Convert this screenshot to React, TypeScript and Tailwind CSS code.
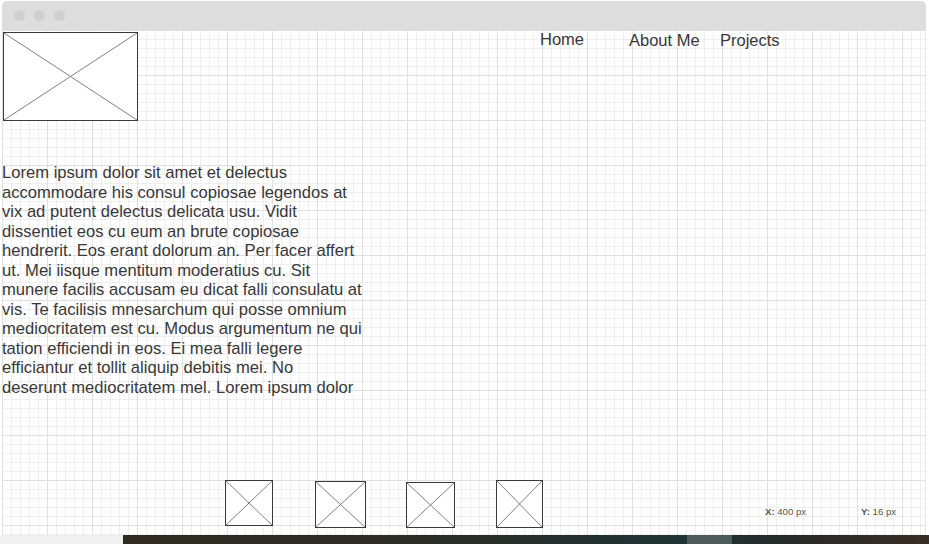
import type { ReactNode } from "react";

const lines = [
  "Lorem ipsum dolor sit amet et delectus",
  "accommodare his consul copiosae legendos at",
  "vix ad putent delectus delicata usu. Vidit",
  "dissentiet eos cu eum an brute copiosae",
  "hendrerit. Eos erant dolorum an. Per facer affert",
  "ut. Mei iisque mentitum moderatius cu. Sit",
  "munere facilis accusam eu dicat falli consulatu at",
  "vis. Te facilisis mnesarchum qui posse omnium",
  "mediocritatem est cu. Modus argumentum ne qui",
  "tation efficiendi in eos. Ei mea falli legere",
  "efficiantur et tollit aliquip debitis mei. No",
  "deserunt mediocritatem mel. Lorem ipsum dolor",
];

function Placeholder({ w, h, className }: { w: number; h: number; className?: string }) {
  return (
    <svg width={w} height={h} viewBox={`0 0 ${w} ${h}`} className={`shrink-0 bg-white ${className ?? ""}`}>
      <line x1="1" y1="1" x2={w - 1} y2={h - 1} stroke="#808080" strokeWidth="1" />
      <line x1={w - 1} y1="1" x2="1" y2={h - 1} stroke="#808080" strokeWidth="1" />
      <rect x="0.5" y="0.5" width={w - 1} height={h - 1} fill="none" stroke="#3a3a3a" strokeWidth="1" />
    </svg>
  );
}

function NavItem({ children, className }: { children: ReactNode; className: string }) {
  return <div className={`shrink-0 text-[16.5px] leading-[18px] text-[#383838] ${className}`}>{children}</div>;
}

export default function App() {
  return (
    <div className="h-[544px] w-[929px] overflow-hidden bg-white font-['Liberation_Sans',Arial,sans-serif]">
      <div className="ml-[2px] mr-[3px] pt-[1px]">
        {/* title bar */}
        <div className="flex h-[29px] items-center gap-[9px] rounded-t-[5px] bg-[#dddddd] pl-[12px]">
          <span className="h-[11px] w-[11px] rounded-full bg-[#cfcfcf]" />
          <span className="h-[11px] w-[11px] rounded-full bg-[#cfcfcf]" />
          <span className="h-[11px] w-[11px] rounded-full bg-[#cfcfcf]" />
        </div>

        {/* canvas */}
        <div className="h-[505px] border-r border-[#e6e6e6] bg-white bg-[image:linear-gradient(to_right,#e0e0e0_1px,transparent_1px),linear-gradient(to_bottom,#e0e0e0_1px,transparent_1px),linear-gradient(to_right,#efefef_1px,transparent_1px),linear-gradient(to_bottom,#efefef_1px,transparent_1px)] bg-[size:45px_45px,45px_45px,9px_9px,9px_9px]">
          <div className="flex items-start">
            <Placeholder w={135} h={89} className="ml-[1px] mt-[2px]" />
            <div className="ml-[402px] flex items-start">
              <NavItem className="w-[89px]">Home</NavItem>
              <NavItem className="mt-[1px] w-[91px]">About Me</NavItem>
              <NavItem className="mt-[1px]">Projects</NavItem>
            </div>
          </div>

          <div className="mt-[42px] text-[16.6px] leading-[19.5px] text-[#383838]">
            {lines.map((l) => (
              <div key={l} className="whitespace-nowrap">
                {l}
              </div>
            ))}
          </div>

          <div className="mt-[83px] flex items-start">
            <Placeholder w={48} h={46} className="ml-[223px]" />
            <Placeholder w={51} h={47} className="ml-[42px] mt-[1px]" />
            <Placeholder w={49} h={46} className="ml-[40px] mt-[2px]" />
            <Placeholder w={47} h={48} className="ml-[41px]" />
            <div className="ml-[222px] mt-[26px] flex text-[9.6px] leading-[11px] text-[#555]">
              <span className="w-[96px]">
                <b>X:</b> 400 px
              </span>
              <span>
                <b>Y:</b> 16 px
              </span>
            </div>
          </div>
        </div>
      </div>

      {/* bottom strip */}
      <div className="flex h-[9px]">
        <div className="w-[123px] bg-[#f0f0f0]" />
        <div className="flex-1 bg-[linear-gradient(to_right,#2f2b20_0%,#2c2d24_35%,#21302f_58%,#1f3434_70%,#4c5b5a_70%,#4c5b5a_75.6%,#1f2f2f_75.6%,#2a2a26_86%,#3a2d24_100%)]" />
      </div>
    </div>
  );
}
